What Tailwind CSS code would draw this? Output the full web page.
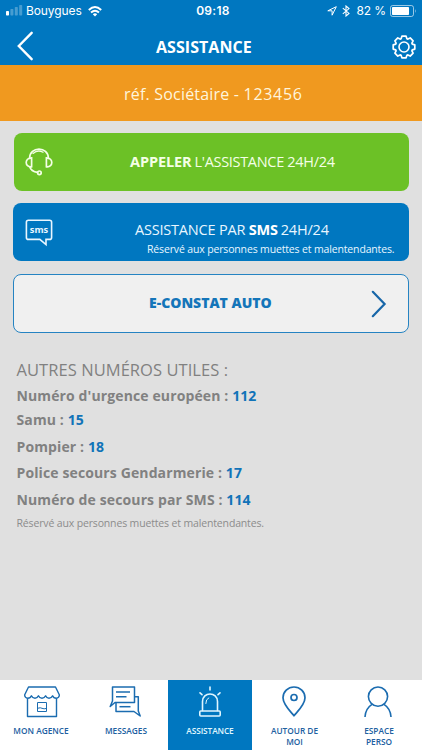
<!DOCTYPE html>
<html lang="fr">
<head>
    <meta charset="UTF-8">
    <meta name="viewport" content="width=device-width, initial-scale=1.0">
    <title>Assistance</title>
    <script src="https://cdn.jsdelivr.net/npm/@tailwindcss/browser@4"></script>
</head>
<body class="bg-[#e0e0e0] font-['Open_Sans','Noto_Sans',sans-serif]">
<div class="flex flex-col w-[422px] h-[750px] overflow-hidden whitespace-nowrap">

    <header class="h-[65px] shrink-0 bg-[#0077c0] text-white">
        <!-- Status bar -->
        <div class="grid grid-cols-[1fr_auto_1fr] items-center h-[22px] pl-[6px] pr-[5px] font-['Inter',sans-serif] text-[12px] leading-[22px]">
            <div class="flex items-center">
                <svg class="w-[17px] h-[12px]" viewBox="0 0 17 12" fill="#fff">
                    <rect x="0" y="6" width="3" height="4.5" rx=".7"/>
                    <g opacity=".28">
                        <rect x="4.4" y="4" width="3" height="6.5" rx=".7"/>
                        <rect x="8.8" y="2" width="3" height="8.5" rx=".7"/>
                        <rect x="13.2" y="0" width="3" height="10.5" rx=".7"/>
                    </g>
                </svg>
                <span class="ml-[3px] tracking-[-0.1px]">Bouygues</span>
                <svg class="w-[14px] h-[11px] ml-[6px]" viewBox="0 0 14 11" fill="none" stroke="#fff" stroke-width="1.9">
                    <path d="M.8 4Q7-1.8 13.2 4"/>
                    <path d="M3 6.5Q7 2.8 11 6.5"/>
                    <path d="M7 10.5L4.8 8.3Q7 6.4 9.2 8.3Z" fill="#fff" stroke="none"/>
                </svg>
            </div>
            <span class="ml-[3px] font-semibold tracking-[0.3px]">09:18</span>
            <div class="flex items-center justify-end">
                <svg class="w-[10px] h-[10px]" viewBox="0 0 10 10" fill="none" stroke="#fff" stroke-width="1" stroke-linejoin="round">
                    <path d="M9.3.7L.8 4.8H5.1V9.2Z"/>
                </svg>
                <svg class="w-[8px] h-[12px] ml-[5px]" viewBox="0 0 8 12" fill="none" stroke="#fff" stroke-width="1.1">
                    <path d="M.8 3.2L7 8.4L4 11V1L7 3.6L.8 8.8"/>
                </svg>
                <span class="ml-[6px] mr-[1px] tracking-[-0.1px]">82 %</span>
                <svg class="w-[27px] h-[12px] ml-[3px]" viewBox="0 0 27 12">
                    <rect x=".5" y=".5" width="23" height="11" rx="2.2" fill="none" stroke="#fff" stroke-opacity=".6"/>
                    <rect x="2" y="2" width="17" height="8" rx=".8" fill="#fff"/>
                    <path d="M25 4Q26.6 6 25 8Z" fill="#fff" fill-opacity=".6"/>
                </svg>
            </div>
        </div>
        <!-- Title bar -->
        <div class="flex items-center h-[43px] pl-[17px] pr-[6px] pt-[5px]">
            <svg class="w-[17px] h-[30px] -mt-[1px]" viewBox="0 0 17 30" fill="none" stroke="#fff" stroke-width="2.4" stroke-linecap="round">
                <path d="M14.7 1.8L1.8 15L14.7 28.2"/>
            </svg>
            <h1 class="mt-[2px] ml-[122px] text-[16px] leading-[24px] font-bold tracking-[0.05px]">ASSISTANCE</h1>
            <svg class="w-[24px] h-[24px] ml-auto mt-[2px]" viewBox="-12 -12 24 24" fill="none" stroke="#fff" stroke-width="1.7" stroke-linejoin="round">
                <path d="M-2.1-10.8H2.1L2.9-8.3L3.9-7.9L6.2-9.1L9.1-6.2L7.9-3.9L8.3-2.9L10.8-2.1V2.1L8.3 2.9L7.9 3.9L9.1 6.2L6.2 9.1L3.9 7.9L2.9 8.3L2.1 10.8H-2.1L-2.9 8.3L-3.9 7.9L-6.2 9.1L-9.1 6.2L-7.9 3.9L-8.3 2.9L-10.8 2.1V-2.1L-8.3-2.9L-7.9-3.9L-9.1-6.2L-6.2-9.1L-3.9-7.9L-2.9-8.3Z"/>
                <circle r="5" stroke-width="1.6"/>
            </svg>
        </div>
    </header>

    <div class="h-[56px] shrink-0 bg-[#f0991f] pl-[124px] pt-[17px] text-[16px] leading-[24px] text-[#fff5dc] tracking-[0.2px]">
        réf. Sociétaire - <span class="tracking-[0.7px]">123456</span>
    </div>

    <main class="flex-1 pt-[12px] pl-[13px] pr-[13px]">
        <a href="#" class="flex h-[58px] ml-[1px] rounded-[8px] bg-[#6cc126] text-[#f4ffe6] pl-[11px]">
            <svg class="w-[28px] h-[28px] mt-[15px]" viewBox="0 0 28 28" fill="none" stroke="currentColor" stroke-width="1.7" stroke-linecap="round">
                <path d="M4.6 10.5C4.6-2 23.4-2 23.4 10.5"/>
                <path d="M8 5.4C11 2.8 15 2.6 18 4.2" stroke-width="1.3"/>
                <path d="M6.6 9.8v9C-.6 19.6-.6 9.8 6.6 9.8Z"/>
                <path d="M21.4 9.8v9C28.6 19.6 28.6 9.8 21.4 9.8Z"/>
                <path d="M4.8 18.8Q6 23.6 12.6 24.4"/>
                <circle cx="14.4" cy="24.8" r="1.8"/>
            </svg>
            <div class="ml-[77px] mt-[19px] text-[14.5px] leading-[20px]"><b class="tracking-[-0.1px]">APPELER</b><span class="ml-[3px] tracking-[-0.31px]">L'ASSISTANCE 24H/24</span></div>
        </a>

        <a href="#" class="flex h-[58px] mt-[12px] rounded-[8px] bg-[#0077c0] text-[#e8f6ff] pl-[12px]">
            <svg class="w-[28px] h-[28px] mt-[16px]" viewBox="0 0 28 28">
                <path d="M3.4 1.2H24.6Q26.6 1.2 26.6 3.2V18.4Q26.6 20.4 24.6 20.4H21V25.6L14.8 20.4H3.4Q1.4 20.4 1.4 18.4V3.2Q1.4 1.2 3.4 1.2Z" fill="none" stroke="currentColor" stroke-width="1.6"/>
                <text x="14" y="13.8" text-anchor="middle" font-size="9.3" font-weight="700" fill="currentColor">sms</text>
            </svg>
            <div class="ml-[81px] mt-[17px]">
                <div class="ml-[1px] text-[14.5px] leading-[20px] tracking-[-0.2px]">ASSISTANCE PAR <b class="text-white">SMS</b><span class="ml-[3px]">24H/24</span></div>
                <div class="ml-[13px] mt-[2px] text-[10.5px] leading-[14px] tracking-[-0.15px]">Réservé aux personnes muettes et malentendantes.</div>
            </div>
        </a>

        <a href="#" class="flex h-[59px] mt-[13px] rounded-[8px] border border-[#2583c2] bg-[#f0f0f0] pl-[135px] text-[#1475b9]">
            <span class="w-[122px] mt-[18px] text-[14px] leading-[20px] font-extrabold">E-CONSTAT AUTO</span>
            <svg class="w-[16px] h-[28px] ml-[100px] mt-[15px]" viewBox="0 0 16 28" fill="none" stroke="#1766a8" stroke-width="2.2" stroke-linecap="round">
                <path d="M1.8 1.8L13.6 14L1.8 26.2"/>
            </svg>
        </a>

        <section class="pl-[3.5px] pt-[25px] text-[#818181]">
            <h2 class="text-[16.5px] leading-[24px] tracking-[0.06px]">AUTRES NUMÉROS UTILES :</h2>
            <ul class="text-[14px] leading-[20px] font-bold tracking-[0.12px]">
                <li class="mt-[4px]">Numéro d'urgence européen : <span class="text-[#1173b8]">112</span></li>
                <li class="mt-[4px]">Samu : <span class="text-[#1173b8]">15</span></li>
                <li class="mt-[7px]">Pompier : <span class="text-[#1173b8]">18</span></li>
                <li class="mt-[6px]">Police secours Gendarmerie : <span class="text-[#1173b8]">17</span></li>
                <li class="mt-[7px]">Numéro de secours par SMS : <span class="text-[#1173b8]">114</span></li>
            </ul>
            <p class="mt-[6px] text-[10.5px] leading-[14px] tracking-[-0.15px] text-[#8c8c8c]">Réservé aux personnes muettes et malentendantes.</p>
        </section>
    </main>

    <nav class="grid grid-cols-[83px_85px_84px_85px_85px] h-[70px] shrink-0 bg-white text-center text-[8.3px] leading-[11px] font-semibold text-[#20609f]">
        <a href="#" class="flex flex-col items-center">
            <svg class="w-[38px] h-[34px] mt-[5px]" viewBox="0 0 38 34" fill="none" stroke="#1b6cb0" stroke-width="1.4" stroke-linejoin="round">
                <path d="M5.5 2H32.5L36.4 10Q36 13.2 33.3 13.2Q30.5 13.2 29.6 10.8Q28.5 13.2 26 13.2Q23.6 13.2 22.6 10.8Q21.5 13.2 19 13.2Q16.5 13.2 15.4 10.8Q14.4 13.2 12 13.2Q9.5 13.2 8.4 10.8Q7.5 13.2 4.7 13.2Q2 13.2 1.6 10Z"/>
                <path d="M4.5 13.2V31.5H33.5V13.2"/>
                <path d="M14.5 17.5H23.5V26.5H14.5ZM15 23.2Q17.5 22.3 19 23.3Q21 24.3 23.5 23.4" stroke-width="1"/>
            </svg>
            <span class="mt-[6px] -ml-[1px]">MON AGENCE</span>
        </a>
        <a href="#" class="flex flex-col items-center">
            <svg class="w-[34px] h-[34px] mt-[5px] -ml-[1px]" viewBox="0 0 34 34" fill="none" stroke="#1b6cb0" stroke-width="1.5" stroke-linejoin="round">
                <path d="M4.5 2H26.5V17.5H7L2.2 21.5L4.5 16Z"/>
                <path d="M8 7H22M8 11.8H18.5"/>
                <path d="M26.5 11.8H30.3V26L32.2 31L26 26.5H8V17.5"/>
                <path d="M11.5 21.7H22.5"/>
            </svg>
            <span class="mt-[6px] ml-[1px]">MESSAGES</span>
        </a>
        <a href="#" class="flex flex-col items-center bg-[#0077c0] text-[#e0f7ff]">
            <svg class="w-[24px] h-[34px] mt-[5px]" viewBox="0 0 24 34" fill="none" stroke="#dff6ff" stroke-width="1.6" stroke-linecap="round" stroke-linejoin="round">
                <path d="M4.5 25.5V16.5C4.5 6.5 19.5 6.5 19.5 16.5V25.5"/>
                <path d="M7.8 18.5Q7.8 14 10.8 12.8" stroke-width="1"/>
                <rect x="1.8" y="26" width="20.4" height="5" rx="1"/>
                <path d="M12 2V5M2 7.8L4 9.6M22 7.8L20 9.6"/>
            </svg>
            <span class="mt-[6px] tracking-[-0.1px]">ASSISTANCE</span>
        </a>
        <a href="#" class="flex flex-col items-center">
            <svg class="w-[26px] h-[34px] mt-[5px] -ml-[1px]" viewBox="0 0 26 34" fill="none" stroke="#1b6cb0" stroke-width="1.7" stroke-linejoin="round">
                <path d="M13 30.8C9 26 2 19.5 2 12.8A11 10.8 0 0 1 24 12.8C24 19.5 17 26 13 30.8Z"/>
                <circle cx="13" cy="12.5" r="3"/>
            </svg>
            <span class="mt-[6px]">AUTOUR DE<br>MOI</span>
        </a>
        <a href="#" class="flex flex-col items-center">
            <svg class="w-[30px] h-[34px] mt-[5px] -ml-[3px]" viewBox="0 0 30 34" fill="none" stroke="#1b6cb0" stroke-width="1.6">
                <circle cx="15" cy="11.6" r="9.6"/>
                <path d="M2 32Q2.5 23.5 9 19.4M28 32Q27.5 23.5 21 19.4"/>
            </svg>
            <span class="mt-[6px] -ml-[1px]">ESPACE<br>PERSO</span>
        </a>
    </nav>
</div>
</body>
</html>
